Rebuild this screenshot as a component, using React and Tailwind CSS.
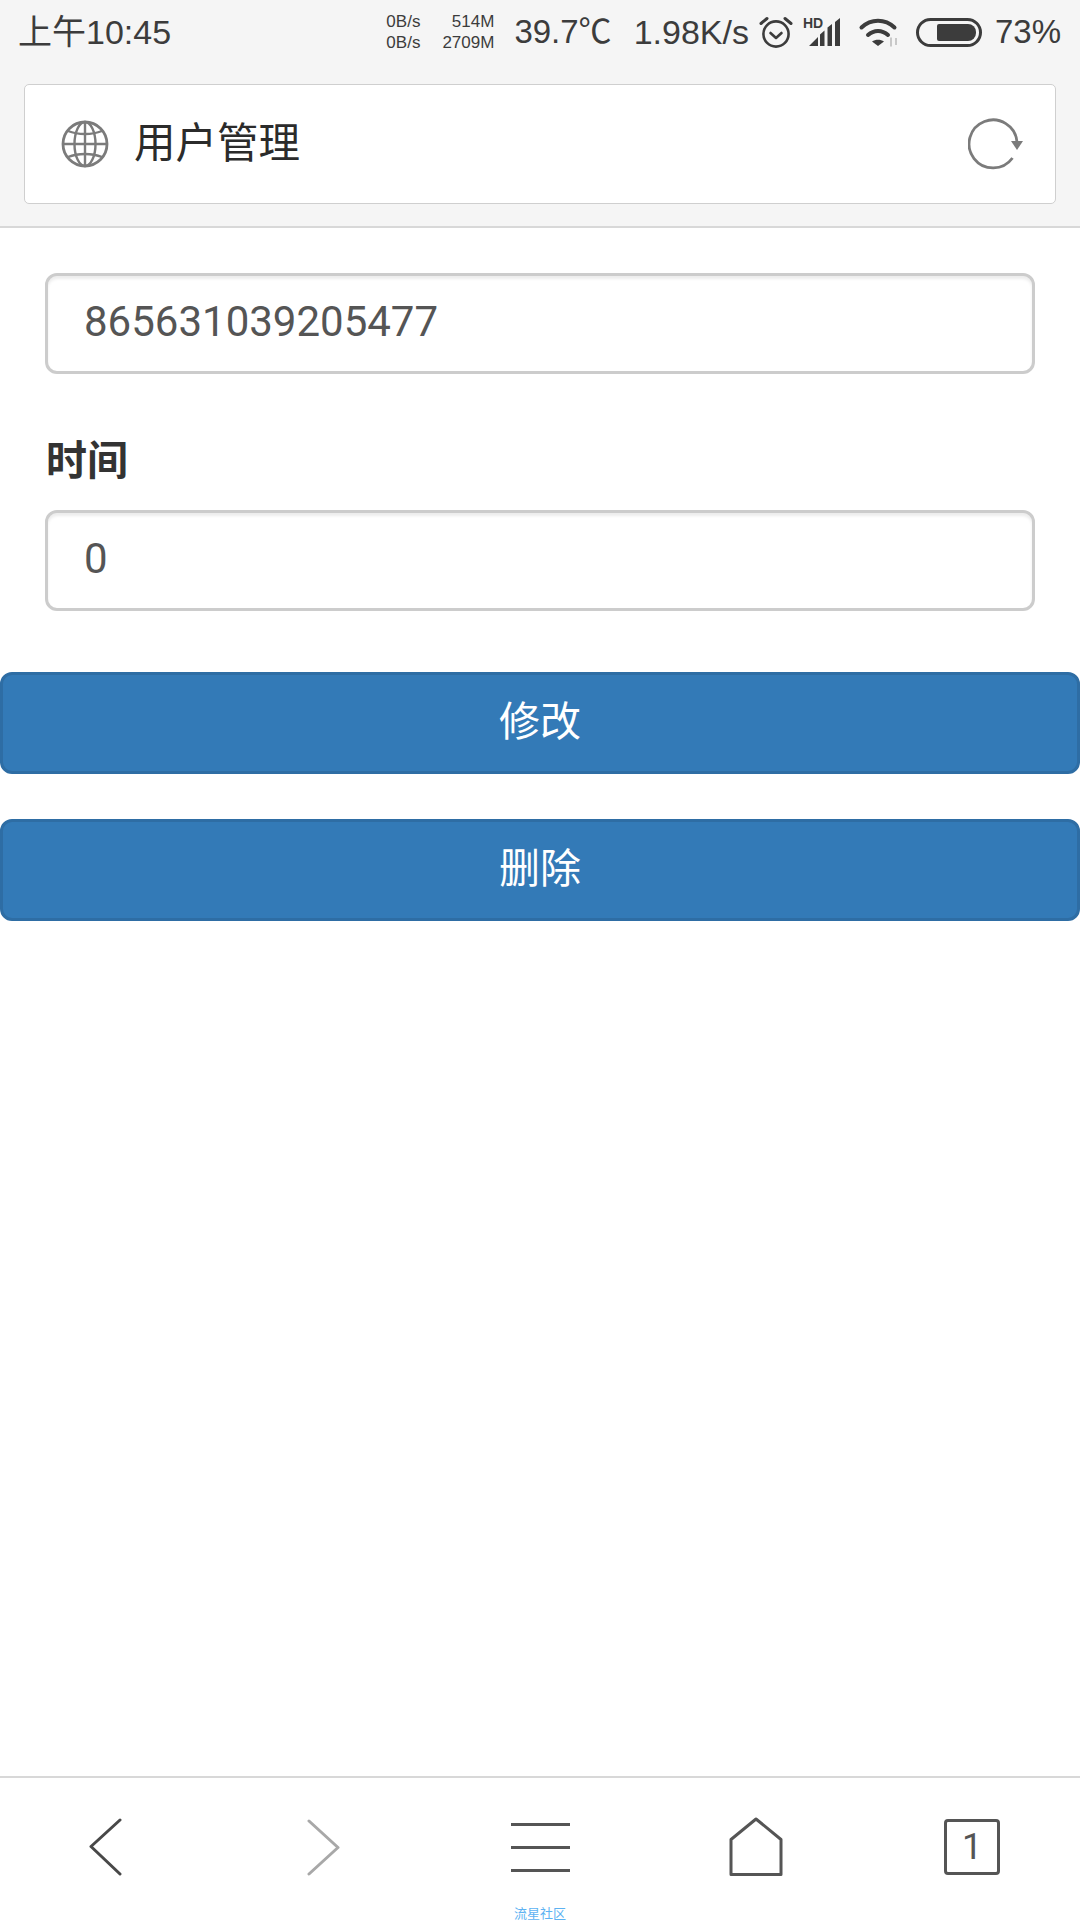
import React from 'react';

const Field = ({ value }) => (
  <div className="mx-[45px] h-[101px] border-[3px] border-[#ccc] rounded-[12px] bg-white shadow-[inset_0_3px_3px_rgba(0,0,0,0.075)] flex items-center pl-[36px] pb-[5px] text-[42px] text-[#555]">
    {value}
  </div>
);

const BlueButton = ({ children }) => (
  <button className="w-full h-[102px] bg-[#337ab7] border-[3px] border-[#2e6da4] rounded-[12px] text-white text-[41px] flex items-center justify-center">
    {children}
  </button>
);

const Alarm = () => (
  <svg width="34" height="34" viewBox="0 0 34 34" fill="none" stroke="#3c3c3c" strokeWidth="2.6" strokeLinecap="round" strokeLinejoin="round">
    <circle cx="17" cy="19" r="12.6" />
    <path d="M11.5 18l5.5 5 5.500-5" />
    <path d="M2 8.500L8 3.500M32 8.500L26 3.500" strokeWidth="3" />
  </svg>
);

const Signal = () => (
  <div className="relative w-[38px] h-[30px]">
    <span className="absolute left-0 top-[0px] text-[14px] leading-[12px] font-bold text-[#3c3c3c]">HD</span>
    <svg className="absolute left-0 top-0" width="38" height="30" viewBox="0 0 38 30" fill="#3c3c3c">
      <path d="M6 29l9-9v9zM17 29V17.500l4.500-4V29zM24.500 29V10.500l4.500-3.500V29zM32 29V5l5-4v28z" />
    </svg>
  </div>
);

const Wifi = () => (
  <svg width="42" height="30" viewBox="0 0 42 30" fill="none">
    <path d="M3.500 10.500C13 1.500 27 1.500 36.500 10.500" stroke="#3c3c3c" strokeWidth="4" strokeLinecap="round" />
    <path d="M10 18C16 12.500 24 12.500 30 18" stroke="#3c3c3c" strokeWidth="4" strokeLinecap="round" />
    <path d="M20 29l-6-4.500c3.500-2.500 8.500-2.500 12 0z" fill="#3c3c3c" />
    <path d="M33 20.500v9M38 21v7" stroke="#c8c8c8" strokeWidth="2" />
  </svg>
);

const Battery = () => (
  <div className="w-[66px] h-[29px] border-[3px] border-[#3c3c3c] rounded-[15px] flex items-center justify-end pr-[3px]">
    <div className="w-[39px] h-[17px] bg-[#3c3c3c] rounded-l-[2px] rounded-r-[8px]" />
  </div>
);

const Globe = () => (
  <svg width="48" height="48" viewBox="0 0 48 48" fill="none" stroke="#7b7b7b" strokeWidth="2.400">
    <circle cx="24" cy="24" r="22" strokeWidth="2.800" />
    <ellipse cx="24" cy="24" rx="10.500" ry="22" />
    <path d="M24 2v44M2 24h44" />
    <path d="M7 11c10 4 24 4 34 0M7 37c10-4 24-4 34 0" />
  </svg>
);

const Refresh = () => (
  <svg width="56" height="52" viewBox="0 0 56 52" fill="none">
    <path d="M49 24A24 24 0 1 0 44.500 40" stroke="#7b7b7b" strokeWidth="2.800" />
    <path d="M43 23h12l-6 9z" fill="#7b7b7b" />
  </svg>
);

const Back = () => (
  <svg width="34" height="58" viewBox="0 0 34 58" fill="none" stroke="#484848" strokeWidth="3" strokeLinecap="round" strokeLinejoin="round">
    <path d="M31 2L2 28.500L31 56" />
  </svg>
);

const Forward = () => (
  <svg width="34" height="58" viewBox="0 0 34 58" fill="none" stroke="#a8a8a8" strokeWidth="3" strokeLinecap="round" strokeLinejoin="round">
    <path d="M2 3L31 29.500L2 56" />
  </svg>
);

const Menu = () => (
  <div className="w-[59px] flex flex-col gap-[20px]">
    <div className="h-[3px] bg-[#555]" />
    <div className="h-[3px] bg-[#555]" />
    <div className="h-[3px] bg-[#555]" />
  </div>
);

const Home = () => (
  <svg width="56" height="60" viewBox="0 0 56 60" fill="none" stroke="#555" strokeWidth="3" strokeLinejoin="round">
    <path d="M28 2L3 22.500V57.500H53V22.500Z" />
  </svg>
);

const App = () => {
  return (
    <div className="w-[1080px] h-[1920px] bg-white flex flex-col overflow-hidden font-['Roboto','Noto_Sans_CJK_SC',sans-serif]">
      <header className="h-[228px] bg-[#f5f5f5] border-b-2 border-[#d8d8d8] shrink-0">
        <div className="h-[64px] flex items-center text-[#3c3c3c] pl-[18px] pr-[19px] font-['Liberation_Sans','Noto_Sans_CJK_SC',sans-serif]">
          <span className="text-[34px]">上午10:45</span>
          <div className="ml-auto flex items-center">
            <div className="text-[17px] leading-[21px] text-right">
              <div>0B/s</div>
              <div>0B/s</div>
            </div>
            <div className="w-[74px] text-[17px] leading-[21px] text-right mr-[20px]">
              <div>514M</div>
              <div>2709M</div>
            </div>
            <span className="text-[33px] mr-[22px]">39.7℃</span>
            <span className="text-[34px] mr-[10px]">1.98K/s</span>
            <Alarm />
            <div className="w-[10px]" />
            <Signal />
            <div className="w-[17px]" />
            <Wifi />
            <div className="w-[16px]" />
            <Battery />
            <span className="text-[33px] ml-[13px]">73%</span>
          </div>
        </div>
        <div className="mx-[24px] mt-[20px] h-[120px] bg-white border border-[#cfcfcf] rounded-[5px] flex items-center pl-[36px] pr-[31px]">
          <Globe />
          <span className="ml-[25px] text-[41.500px] text-[#2b2b2b]">用户管理</span>
          <div className="ml-auto">
            <Refresh />
          </div>
        </div>
      </header>

      <main className="flex-1 pt-[45px]">
        <Field value="865631039205477" />
        <label className="block ml-[46px] mt-[60px] mb-[22px] text-[41px] leading-[54px] font-bold text-[#333]">时间</label>
        <Field value="0" />
        <div className="mt-[61px] flex flex-col gap-[45px]">
          <BlueButton>修改</BlueButton>
          <BlueButton>删除</BlueButton>
        </div>
      </main>

      <footer className="h-[144px] border-t-2 border-[#d8d8d8] bg-white shrink-0 relative">
        <div className="h-[140px] grid grid-cols-5 items-center pb-[2px]">
          <div className="flex justify-center pr-[5px]"><Back /></div>
          <div className="flex justify-center"><Forward /></div>
          <div className="flex justify-center"><Menu /></div>
          <div className="flex justify-center"><Home /></div>
          <div className="flex justify-center">
            <div className="w-[56px] h-[56px] border-[3px] border-[#555] rounded-[4px] flex items-center justify-center text-[36px] text-[#555]">1</div>
          </div>
        </div>
        <div className="absolute left-0 right-0 top-[128px] text-center text-[13px] leading-[16px] text-[#5db2f2]">流星社区</div>
      </footer>
    </div>
  );
};

export default App;
